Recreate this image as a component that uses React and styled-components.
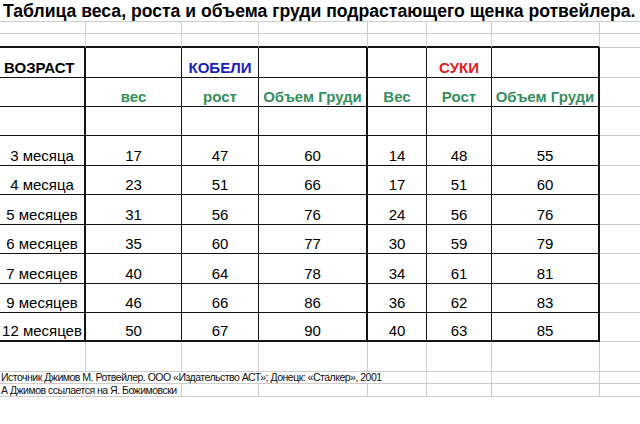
import React from "react";
import styled, { createGlobalStyle, css } from "styled-components";

const Global = createGlobalStyle`
  html, body { margin: 0; padding: 0; background: #fff; }
  body { font-family: "Liberation Sans", Arial, sans-serif; overflow: hidden; }
`;

const GRID = "#cdcdcd";
const INK = "#141414";

const Sheet = styled.div`
  display: grid;
  grid-template-columns: 86px 96px 77px 109px 59px 65px 108px 60px;
  grid-template-rows: 22px 12px 14px 30px 29px 29px 30px 29px 30px 29px 30px 29px 29px 30px 12px 13px;
  width: 660px;
  color: #000;
`;

const Cell = styled.div`
  box-sizing: border-box;
  display: flex;
  align-items: flex-end;
  justify-content: ${(p) => (p.$align === "left" ? "flex-start" : "center")};
  grid-column: ${(p) => (p.$span ? `span ${p.$span}` : "auto")};
  padding-left: ${(p) => (p.$align === "left" ? "4px" : "0")};
  padding-bottom: 1px;
  font-size: 15px;
  line-height: 17px;
  white-space: nowrap;
  overflow: visible;
  font-weight: ${(p) => (p.$bold ? 700 : 400)};
  color: ${(p) => p.$color || "#000"};
  border-right: 1px solid ${GRID};
  border-bottom: 1px solid ${GRID};
  ${(p) =>
    p.$table &&
    css`
      border-right: ${p.$thickR ? 2 : 1}px solid ${INK};
      border-bottom: ${p.$thickB ? 2 : 1}px solid ${INK};
    `}
  ${(p) => p.$topEdge && css`border-bottom: 2px solid ${INK};`}
`;

const Title = styled(Cell)`
  font-size: 17.6px;
  font-weight: 700;
  line-height: 20px;
  padding-left: 3px;
  align-items: center;
  padding-bottom: 0;
`;

const Note = styled(Cell)`
  font-size: 10.5px;
  line-height: 11px;
  letter-spacing: -0.5px;
  padding-left: 1px;
  padding-bottom: 0;
  color: #111;
`;

const COLS = 8;
const blankRow = (key, opts = {}) =>
  Array.from({ length: COLS }, (_, i) => (
    <Cell key={`${key}-${i}`} $topEdge={opts.topEdge && i < 7} />
  ));

const tableCell = (key, col, content, extra = {}) => (
  <Cell
    key={key}
    $table
    $thickR={col === 0 || col === 3 || col === 6}
    $thickB={extra.last}
    $align={extra.align}
    $bold={extra.bold}
    $color={extra.color}
  >
    {content}
  </Cell>
);

const GREEN = "#35905e";
const BLUE = "#1b22b8";
const RED = "#e0201d";

const rows = [
  ["3 месяца", 17, 47, 60, 14, 48, 55],
  ["4 месяца", 23, 51, 66, 17, 51, 60],
  ["5 месяцев", 31, 56, 76, 24, 56, 76],
  ["6 месяцев", 35, 60, 77, 30, 59, 79],
  ["7 месяцев", 40, 64, 78, 34, 61, 81],
  ["9 месяцев", 46, 66, 86, 36, 62, 83],
  ["12 месяцев", 50, 67, 90, 40, 63, 85],
];

const head1 = [
  { t: "ВОЗРАСТ", bold: true, align: "left" },
  { t: "" },
  { t: "КОБЕЛИ", bold: true, color: BLUE },
  { t: "" },
  { t: "" },
  { t: "СУКИ", bold: true, color: RED },
  { t: "" },
];

const head2 = ["", "вес", "рост", "Объем Груди", "Вес", "Рост", "Объем Груди"];

export default function App() {
  return (
    <>
      <Global />
      <Sheet>
        <Title $span={8} $align="left">
          Таблица веса, роста и объема груди подрастающего щенка ротвейлера.
        </Title>
        {blankRow("r1")}
        {blankRow("r2", { topEdge: true })}

        {head1.map((h, i) =>
          tableCell(`h1-${i}`, i, h.t, { bold: h.bold, color: h.color, align: h.align })
        )}
        <Cell key="h1-h" />

        {head2.map((h, i) => tableCell(`h2-${i}`, i, h, { bold: true, color: GREEN }))}
        <Cell key="h2-h" />

        {head2.map((_, i) => tableCell(`e-${i}`, i, ""))}
        <Cell key="e-h" />

        {rows.map((r, ri) => (
          <React.Fragment key={`row-${ri}`}>
            {r.map((v, ci) => tableCell(`d-${ri}-${ci}`, ci, v, { last: ri === rows.length - 1 }))}
            <Cell />
          </React.Fragment>
        ))}

        {blankRow("after")}

        <Note $span={5} $align="left">
          Источник Джимов М. Ротвейлер. ООО «Издательство АСТ»; Донецк: «Сталкер», 2001
        </Note>
        <Cell />
        <Cell />
        <Cell />

        <Note $span={2} $align="left">
          А Джимов ссылается на Я. Божимовски
        </Note>
        <Cell />
        <Cell />
        <Cell />
        <Cell />
        <Cell />
        <Cell />
      </Sheet>
    </>
  );
}
